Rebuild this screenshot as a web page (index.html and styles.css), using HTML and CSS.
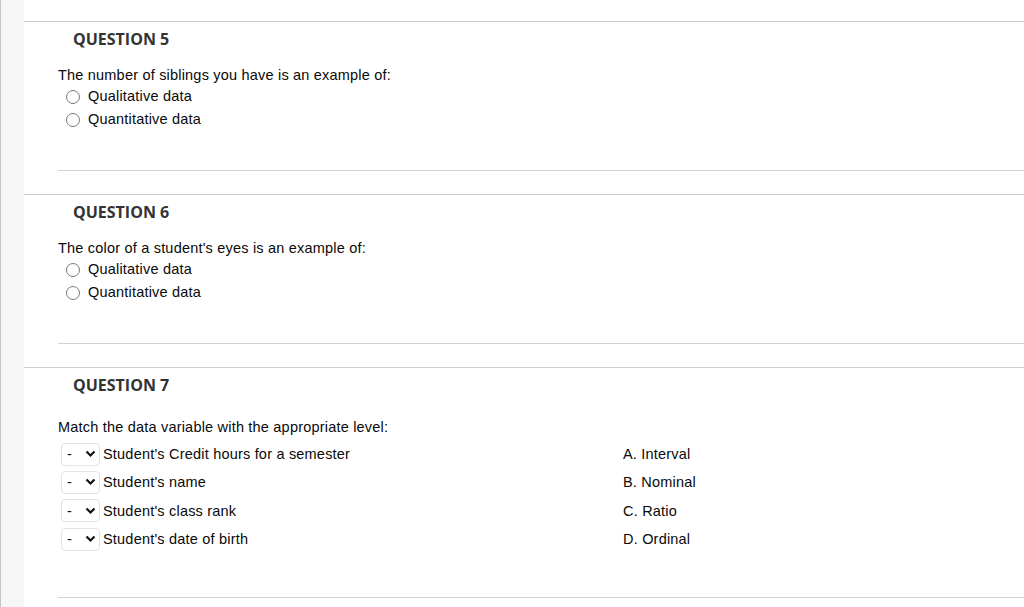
FILE: index.html
```html
<!DOCTYPE html>
<html lang="en">
<head>
<meta charset="utf-8">
<title>Questions</title>
<link rel="stylesheet" href="styles.css">
</head>
<body>
<div class="page">
  <aside class="sidebar"></aside>
  <main class="main">
    <section class="question">
      <h2 class="q-title">QUESTION 5</h2>
      <div class="q-body">
        <p class="q-text">The number of siblings you have is an example of:</p>
        <ul class="options">
          <li class="option"><span class="radio"></span><span>Qualitative data</span></li>
          <li class="option"><span class="radio"></span><span>Quantitative data</span></li>
        </ul>
      </div>
    </section>
    <section class="question">
      <h2 class="q-title">QUESTION 6</h2>
      <div class="q-body">
        <p class="q-text">The color of a student's eyes is an example of:</p>
        <ul class="options">
          <li class="option"><span class="radio"></span><span>Qualitative data</span></li>
          <li class="option"><span class="radio"></span><span>Quantitative data</span></li>
        </ul>
      </div>
    </section>
    <section class="question">
      <h2 class="q-title">QUESTION 7</h2>
      <div class="q-body match-body">
        <p class="q-text match-text">Match the data variable with the appropriate level:</p>
        <div class="match">
          <ul class="match-left">
            <li class="match-row"><span class="select"><span class="dash">-</span><svg class="chev" width="11" height="8" viewBox="0 0 11 8"><polyline points="1.5,1.5 5.5,5.5 9.5,1.5" fill="none" stroke="#111" stroke-width="2.2"/></svg></span><span>Student's Credit hours for a semester</span></li>
            <li class="match-row"><span class="select"><span class="dash">-</span><svg class="chev" width="11" height="8" viewBox="0 0 11 8"><polyline points="1.5,1.5 5.5,5.5 9.5,1.5" fill="none" stroke="#111" stroke-width="2.2"/></svg></span><span>Student's name</span></li>
            <li class="match-row"><span class="select"><span class="dash">-</span><svg class="chev" width="11" height="8" viewBox="0 0 11 8"><polyline points="1.5,1.5 5.5,5.5 9.5,1.5" fill="none" stroke="#111" stroke-width="2.2"/></svg></span><span>Student's class rank</span></li>
            <li class="match-row"><span class="select"><span class="dash">-</span><svg class="chev" width="11" height="8" viewBox="0 0 11 8"><polyline points="1.5,1.5 5.5,5.5 9.5,1.5" fill="none" stroke="#111" stroke-width="2.2"/></svg></span><span>Student's date of birth</span></li>
          </ul>
          <ul class="match-right">
            <li class="match-row">A. Interval</li>
            <li class="match-row">B. Nominal</li>
            <li class="match-row">C. Ratio</li>
            <li class="match-row">D. Ordinal</li>
          </ul>
        </div>
      </div>
    </section>
  </main>
</div>
</body>
</html>
```

FILE: styles.css
```css
* { box-sizing: border-box; }
html, body { margin: 0; padding: 0; background: #fff; }
body {
  font-family: "Liberation Sans", Arial, sans-serif;
  font-size: 14.5px;
  letter-spacing: 0.2px;
  color: #0a0a0a;
}
.page {
  display: flex;
  min-height: 607px;
  height: 607px;
  overflow: hidden;
}
.sidebar {
  width: 24px;
  flex: 0 0 24px;
  background: #f6f6f6;
  border-left: 1px solid #c4c4c4;
}
.main {
  flex: 1;
  padding-top: 21px;
}
.question {
  border-top: 1px solid #cdcdcd;
  padding-top: 6px;
  margin-bottom: 23px;
}
.q-title {
  margin: 0 0 0 49px;
  font-family: "Open Sans", sans-serif;
  font-weight: 700;
  font-size: 16px;
  letter-spacing: 0;
  line-height: 22px;
  color: #333;
}
.q-body {
  margin-left: 34px;
  border-bottom: 1px solid #d2d2d2;
  padding-bottom: 40px;
}
.q-text {
  margin: 15px 0 0 0;
  line-height: 20px;
}
.options {
  list-style: none;
  margin: 0 0 -1px 0;
  padding: 0 0 0 8px;
}
.option {
  display: flex;
  align-items: center;
  gap: 8px;
  height: 23px;
  line-height: 23px;
}
.radio {
  width: 14px;
  height: 14px;
  border: 1px solid #7a7a7a;
  border-radius: 50%;
  background: #fff;
  flex: 0 0 14px;
}
.match-body {
  padding-bottom: 44px;
}
.match-text {
  margin-top: 21px;
}
.match {
  display: flex;
  margin-top: 3px;
}
.match-left, .match-right {
  list-style: none;
  margin: 0;
  padding: 0;
}
.match-left {
  width: 565px;
  padding-left: 3px;
}
.match-row {
  display: flex;
  align-items: center;
  height: 28.33px;
  line-height: 18px;
}
.select {
  display: flex;
  align-items: center;
  justify-content: space-between;
  width: 39px;
  height: 23px;
  border: 1px solid #e3e3e3;
  border-radius: 4px;
  padding: 0 3px 0 5px;
  margin-right: 3px;
  background: #fff;
}
.dash {
  line-height: 18px;
}
.chev {
  display: block;
}
```
